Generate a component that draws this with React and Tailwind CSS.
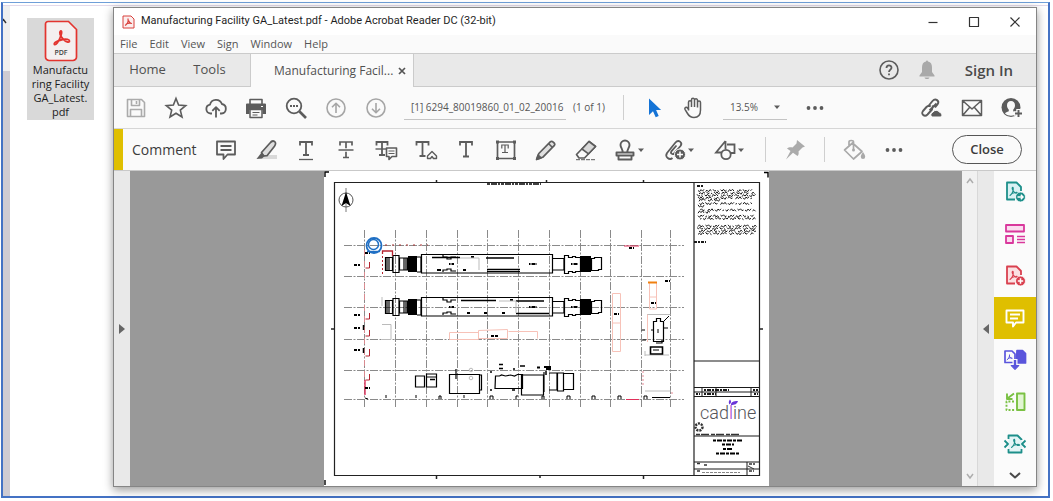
import React from "react";

function Icon({ children, color = "#5c5c5c", w = 24, sw = 1.6 }) {
  return (
    <svg
      aria-hidden="true"
      width={w}
      height="24"
      viewBox={`0 0 ${w} 24`}
      fill="none"
      stroke={color}
      strokeWidth={sw}
      strokeLinejoin="round"
      className="shrink-0"
    >
      {children}
    </svg>
  );
}

function Tool({ label, children, className = "w-10", height = "h-8" }) {
  return (
    <button type="button" aria-label={label} className={`flex shrink-0 items-center justify-center ${height} ${className}`}>
      {children}
    </button>
  );
}

const CaretIcon = () => (
  <svg aria-hidden="true" width="6" height="24" viewBox="0 0 6 24" className="shrink-0">
    <path d="M0 10.500h6l-3 3.500z" fill="#5c5c5c" />
  </svg>
);

const Dots = () => (
  <Icon>
    <g fill="#5c5c5c" stroke="none">
      <circle cx="5.500" cy="12" r="1.900" />
      <circle cx="12" cy="12" r="1.900" />
      <circle cx="18.500" cy="12" r="1.900" />
    </g>
  </Icon>
);

/* Serif capital T drawn as strokes, used by the text markup tools */
const Tee = ({ x = 12, top = 4, bottom = 17, half = 6, sw = 1.8 }) => (
  <path
    strokeWidth={sw}
    strokeLinejoin="miter"
    d={`M${x - half} ${top + 3.5}V${top}H${x + half}V${top + 3.5}M${x} ${top}V${bottom}M${x - 3} ${bottom}H${x + 3}`}
  />
);

const acro = "M8.5 15.5c2-1.500 3.500-4.500 3.200-7.500c-.5-1.500-1.500 0-.7 1.500c.8 2 2.500 4 5 4c1.500-.5 0-1.500-2-1c-2 .2-4 1-5.500 3z";

function MainToolbar() {
  return (
    <div className="flex h-[42px] items-center border-b border-[#d6d6d6] pl-[2px] pr-1">
      <Tool label="Save">
        <Icon color="#ababab">
          <path d="M3.500 3.500h14l3 3v14h-17zM7.500 3.500v6h8v-6M6.500 20.500v-7h11v7M12.500 5v3" />
        </Icon>
      </Tool>
      <Tool label="Star">
        <Icon>
          <path d="M12 2.500l2.600 6.600 7.100.5-5.400 4.500 1.700 6.900-6-3.800-6 3.800 1.700-6.900-5.400-4.500 7.100-.5z" strokeLinejoin="miter" />
        </Icon>
      </Tool>
      <Tool label="Upload to cloud">
        <Icon sw={1.8}>
          <path d="M8 17.500H6.500a4.500 4.500 0 0 1-.5-8.900a6.200 6.200 0 0 1 11.900-.6a4.800 4.800 0 0 1-.4 9.500H16M12 21.500v-10M8.300 14.800l3.700-3.700 3.700 3.700" />
        </Icon>
      </Tool>
      <Tool label="Print">
        <Icon>
          <path d="M6 8V3.500h12V8" />
          <path d="M2 8.500a1 1 0 0 1 1-1h18a1 1 0 0 1 1 1V18h-3.500v-4h-13v4H2z" fill="#5c5c5c" stroke="none" />
          <path d="M6 13.500h12v8H6z" fill="#fafafa" strokeWidth="1.500" />
          <path d="M8.500 16.500h7M8.500 19h5" strokeWidth="1.200" />
          <path d="M17 10.500h2" stroke="#fff" strokeWidth="1.200" />
        </Icon>
      </Tool>
      <Tool label="Find">
        <Icon sw={1.8}>
          <circle cx="10" cy="10" r="7.300" />
          <path d="M15.500 15.500l6.500 6.500" strokeWidth="2.600" />
          <path d="M6 10h2M9 10h2M12 10h2" strokeWidth="1.800" />
        </Icon>
      </Tool>
      <Tool label="Previous page">
        <Icon color="#a6a6a6">
          <circle cx="12" cy="12" r="9" />
          <path d="M12 17V7.500M8 11.300l4-4 4 4" />
        </Icon>
      </Tool>
      <Tool label="Next page">
        <Icon color="#a6a6a6">
          <circle cx="12" cy="12" r="9" />
          <path d="M12 7v9.500M8 12.700l4 4 4-4" />
        </Icon>
      </Tool>
      <input
        aria-label="Page number"
        defaultValue="[1] 6294_80019860_01_02_20016"
        className="ml-2 h-6 w-[162px] border-b border-[#c4c4c4] bg-transparent pl-[7px] text-[10px] text-[#555]"
      />
      <span className="ml-[7px] whitespace-nowrap text-[10px] text-[#555]">(1 of 1)</span>
      <span className="ml-[18px] h-[25px] w-px bg-[#cfcfcf]" />
      <Tool label="Select" className="ml-[10px] w-10">
        <Icon>
          <path d="M7 2.500v16.500l4-3.800 2.700 6 3-1.300-2.600-5.800h5z" fill="#1473d6" stroke="none" />
        </Icon>
      </Tool>
      <Tool label="Hand">
        <Icon sw={1.5}>
          <path d="M6.500 14.500V6.300a1.500 1.500 0 0 1 3 0V11M9.500 11V3.800a1.500 1.500 0 0 1 3 0V11M12.500 11V4.300a1.500 1.500 0 0 1 3 0V11.500M15.500 11.500V6.500a1.500 1.500 0 0 1 3 0V14c0 5-2.500 7.500-6.500 7.500-3.500 0-5-1.500-6.500-4L3 13.300c-.8-1.500 1.500-2.800 2.500-1.300l1.500 2" />
        </Icon>
      </Tool>
      <button type="button" className="ml-[9px] flex h-6 w-16 shrink-0 items-center justify-between border-b border-[#c4c4c4] pl-[7px] pr-[7px] text-[10px] text-[#555]">
        13.5%
        <CaretIcon />
      </button>
      <Tool label="More tools" className="ml-2 w-10">
        <Dots />
      </Tool>
      <div className="ml-auto flex">
        <Tool label="Share link">
          <Icon sw={1.9}>
            <path d="M9.500 14.500l7-7M8 10.500l4.500-5.500c3-3.500 7.500 0 5 3.500l-2.500 3M13 9.500l-1 4-4.500 5c-3 3-7-.5-4.500-3.500l3.500-4c1.200-1.300 3-1.500 4.200-.5" />
            <path d="M12 21a2.600 2.600 0 0 1 .8-4.700a3.800 3.800 0 0 1 6.700 0a2.700 2.700 0 0 1 1.500 4.700z" fill="#5c5c5c" stroke="#fafafa" strokeWidth="1" />
          </Icon>
        </Tool>
        <Tool label="Send by email">
          <Icon>
            <path d="M2.500 4.500h19v15h-19zM3 5l9 8 9-8M3 19l6.500-7.500M21 19l-6.500-7.500" strokeWidth="1.500" />
          </Icon>
        </Tool>
        <Tool label="Add people">
          <Icon>
            <circle cx="11" cy="11.500" r="9.500" fill="#5c5c5c" stroke="none" />
            <path d="M11 5c-2.500 0-4 1.800-4 4.300 0 2 .8 3.500 1.800 4.400v1.500c-1.800.7-3.300 1.300-3.800 2.300 3.500 3 8.500 3 12 0-.5-1-2-1.600-3.800-2.300v-1.500c1-.9 1.800-2.400 1.800-4.400 0-2.500-1.500-4.300-4-4.300z" fill="#fafafa" stroke="none" />
            <path d="M18.500 13v9M14 17.500h9" stroke="#fafafa" strokeWidth="4.500" />
            <path d="M18.500 14v7M15 17.500h7" strokeWidth="1.900" />
          </Icon>
        </Tool>
      </div>
    </div>
  );
}

function CommentBar() {
  return (
    <div className="flex h-[42px] items-center border-b border-[#c9c9c9]">
      <span className="w-[9px] self-stretch bg-[#dfbf00]" />
      <h1 className="w-[83px] shrink-0 pl-[9px] text-[14px] font-medium text-[#3c3c3c]">Comment</h1>
      <Tool label="Sticky note">
        <Icon sw={1.8}>
          <path d="M3 3.500h18v13h-7.500l-4 4.500v-4.500H3zM6.500 8h11M6.500 12h11" />
        </Icon>
      </Tool>
      <Tool label="Highlight">
        <Icon>
          <path d="M12 17h11v4H5z" fill="#d9d9d9" stroke="none" />
          <path d="M7.500 14.500l8.500-9.500c1.500-2 3-2.500 4.500-1.500s1.300 3 0 4.700l-7.500 9.500-3.500.3z" fill="#dedede" strokeWidth="1.700" />
          <path d="M7.500 14.500l3.500 3.200-3 2.800-5.500.5z" fill="#5c5c5c" stroke="none" />
        </Icon>
      </Tool>
      <Tool label="Underline text">
        <Icon>
          <Tee />
          <path d="M5 21.500h14" strokeWidth="1.300" />
        </Icon>
      </Tool>
      <Tool label="Strikethrough text">
        <Icon>
          <Tee bottom={19.5} sw={1.7} />
          <path d="M4.500 12h15" stroke="#fafafa" strokeWidth="3.500" />
          <path d="M4.500 12h15" strokeWidth="1.500" />
        </Icon>
      </Tool>
      <Tool label="Replace text">
        <Icon>
          <Tee x={8} bottom={17} half={5.5} />
          <path d="M1.500 11h11" strokeWidth="1.400" />
          <path d="M12.500 10h10v8.500H18l-3 3v-3h-2.500z" fill="#fafafa" strokeWidth="1.600" />
          <path d="M14.500 13h6M14.500 15.500h6" strokeWidth="1.200" />
        </Icon>
      </Tool>
      <Tool label="Insert text">
        <Icon>
          <Tee x={8.5} bottom={18} />
          <path d="M13.500 18l4.500-4.500 4.500 4.500v2.500h-3L18 18.500l-1.500 2h-3z" strokeWidth="1.400" />
        </Icon>
      </Tool>
      <Tool label="Add text">
        <Icon>
          <Tee bottom={18.5} />
        </Icon>
      </Tool>
      <Tool label="Text box">
        <Icon>
          <path d="M3.500 4h17v16.500h-17z" strokeLinejoin="miter" strokeWidth="1.700" />
          <Tee x={11} top={7} bottom={14.5} half={3.2} sw={1.2} />
          <path d="M2 2.500h3v3H2zM19 2.500h3v3h-3zM2 19h3v3H2zM19 19h3v3h-3z" fill="#5c5c5c" stroke="none" />
        </Icon>
      </Tool>
      <Tool label="Pencil">
        <Icon>
          <path d="M2.800 21.300l2-5.800L16.500 3.700c1.500-1.400 5.300 1.900 3.900 3.600L8.700 19.300z" fill="#e0e0e0" strokeWidth="1.700" />
          <path d="M2.500 21.500l1.600-4.500 3 2.900zM14.500 5.500l4 4" fill="#5c5c5c" />
        </Icon>
      </Tool>
      <Tool label="Eraser">
        <Icon>
          <path d="M2.500 16.500L15 3.500l6.500 5L10.500 20H5z" strokeWidth="1.700" />
          <path d="M8 11L15 3.500l6.500 5-7 7.300z" fill="#d9d9d9" strokeWidth="1.600" />
          <path d="M2 21.700h20" strokeWidth="1" strokeDasharray="4 1" />
        </Icon>
      </Tool>
      <Tool label="Stamp" className="w-[50px] gap-px pr-[6px]">
        <Icon sw={1.9}>
          <path d="M3.500 14.500h17v3h-17zM5.500 17.500v4h13v-4M9.500 14.500c.8-3-2-4.500-2-7.500a4.500 4.500 0 0 1 9 0c0 3-2.800 4.500-2 7.500" />
        </Icon>
        <CaretIcon />
      </Tool>
      <Tool label="Attach file" className="w-[50px] gap-px pr-[6px]">
        <Icon sw={1.8}>
          <path d="M9.500 20c-3 2.500-8-1-5.500-5l8.500-10.500c3-3.500 7.500 0 5 3.500l-6.500 7.500c-1.500 1.500-4-.3-2.500-2.300l5-5.700" />
          <circle cx="17" cy="16.500" r="5.500" fill="#5c5c5c" stroke="#fafafa" strokeWidth="1" />
          <path d="M17 13.500v6M14 16.500h6" stroke="#fff" strokeWidth="1.500" />
        </Icon>
        <CaretIcon />
      </Tool>
      <Tool label="Drawing tools" className="w-[50px] gap-px pr-[6px]">
        <Icon sw={1.8}>
          <path d="M12.500 3L3 14.500h6M12.500 3v8M14 6.500h7.500V15h-4" strokeLinejoin="miter" />
          <circle cx="13" cy="16.500" r="4.700" />
        </Icon>
        <CaretIcon />
      </Tool>
      <span className="ml-[9px] h-[25px] w-px bg-[#cfcfcf]" />
      <Tool label="Keep tool selected" className="mx-[9px] w-10">
        <Icon>
          <path d="M14 2l8 6.500-2.500 1-4 4c.5 2 0 3.500-1 4.500L10 14.800 3 21.500l4.500-8.500L4 10.500c1.500-1.300 3.500-1.500 5.500-1l4-4z" fill="#ababab" stroke="none" />
        </Icon>
      </Tool>
      <span className="h-[25px] w-px bg-[#cfcfcf]" />
      <Tool label="Colour" className="ml-[9px] w-10">
        <Icon color="#a9a9a9" sw={1.7}>
          <path d="M10.500 5l9.500 8.500-8.500 7.500-9-9zM11.500 11.500V4c0-2-4.500-2-4.500 0v4" />
          <circle cx="11.500" cy="12" r="1.500" fill="#a9a9a9" stroke="none" />
          <path d="M21 14c1.500 2.300 2.200 3.500 2.200 4.700a2.200 2.200 0 0 1-4.400 0c0-1.200.7-2.400 2.200-4.700z" fill="#a9a9a9" stroke="none" />
        </Icon>
      </Tool>
      <Tool label="More comment tools">
        <Dots />
      </Tool>
      <button type="button" className="ml-auto mr-[14px] h-[29px] w-[70px] shrink-0 rounded-full border border-[#555] text-[13px] font-semibold text-[#3c3c3c]">
        Close
      </button>
    </div>
  );
}

const columns = [364, 395, 426, 457, 487, 518, 549, 580, 610, 641, 670];
const rows = [245, 276, 307, 339, 370, 399];
const notes = [
  [190.5, 698, 753],
  [193, 699, 755],
  [195.5, 697, 756],
  [198, 698, 754],
  [200, 699, 722],
  [203.5, 698, 753],
  [206, 698, 706],
  [210, 700, 757],
  [212, 698, 711],
  [216, 698, 755],
  [218.5, 700, 756],
  [226, 698, 757],
  [228.5, 697, 756],
  [231, 699, 757],
  [233.5, 698, 754],
];
const jitter = [0, 2, -1.5, 1, -2, 1.5, -0.5, 2.2, -1.5, 0.5, -2, 1, 0];

/* A run of unreadably small lettering: a jagged line broken into words */
function scribble([y, x1, x2], row) {
  let d = "";
  for (let x = x1, i = row * 5; x < x2; x += 1.5, i += 1) {
    const pen = i % 5 === 0 || i % 13 === 0 || d === "" ? "M" : "L";
    d += `${pen}${x.toFixed(1)} ${(y + jitter[i % jitter.length] * 0.6).toFixed(1)}`;
  }
  return d;
}

function Machine() {
  return (
    <g stroke="#000" strokeWidth="1.200" fill="none">
      <path d="M385.500 257.500h7v13h-7zM393 255.500h6v17h-6zM399.500 258h8v12h-8zM417 257h4v15h-4M553 258.500h11v11.500h-11" />
      <path d="M421.500 254.500h131v18.500h-131zM564.500 255.500h4v2h4v-1h3v1h5v14h-5v1h-3v-1h-4v2h-4zM591.500 258.500h3v-1h7v12h-3v1h-7z" />
      <path d="M387 258v12M389 258v12M404 258v12M406 258v12" />
      <path d="M408 256h9v16h-9zM580 256h11v16h-11z" fill="#000" stroke="none" />
      <path d="M449 264h5M529 264h8M571 264h7" strokeWidth="2.200" strokeDasharray="1.500 1 4 1" />
      <path d="M443 255v2h4v2h4v-2h5M443 272v-2h4v-1h4v2h5" />
    </g>
  );
}

function Drawing() {
  return (
    <svg role="img" aria-label="Manufacturing facility general arrangement drawing" width="445" height="315" viewBox="324 171 445 315" className="shrink-0 bg-white">
      <g fill="none" stroke="#222">
        <path d="M334 182.500h425.500M759.500 182v294M334 475.500h426M334.500 182v294M694 182v294" strokeWidth="1.200" />
        <path d="M325 177v-5h4M764 172.500h4v5M325 480v5" stroke="#000" strokeWidth="1.400" />
        <path d="M436.500 180v3M546.500 180v3M643.500 180v3M436.500 475v4M540 475v3M643.500 475v4M331 329h4M759 329h4" strokeWidth="1.500" />
      </g>
      <path d="M487 184h54" stroke="#000" strokeWidth="1.500" strokeDasharray="3 1 6 1 2 1" />

      <g fill="none" stroke="#555">
        <circle cx="346" cy="200" r="7" strokeWidth="1" />
        <path d="M346 188v24" strokeWidth=".8" />
        <path d="M346 192l4.500 14-4.500-3-4.500 3z" fill="#000" stroke="none" />
      </g>

      <g stroke="#8a8a8a" strokeWidth="1" strokeDasharray="8 1.500 2 1.500">
        {columns.map((x) => (
          <path key={x} d={`M${x + 0.5} 230v177`} />
        ))}
        {rows.map((y) => (
          <path key={y} d={`M344 ${y + 0.5}h340`} />
        ))}
      </g>

      <Machine />
      <g transform="translate(0 43)">
        <Machine />
      </g>
      <g stroke="#000" fill="none">
        <path d="M432 257.500h28M486 258h28M487 269.500h33M461 300.500h35M516 301h28M516 313.500h33" strokeWidth="1.600" />
        <path d="M437 270h4M463 270h3M471 257h3M467 313h3M484 313h3M502 313h3M510 300h3" strokeWidth="2" />
        <path d="M460 258h19v12M499 301h17v12" stroke="#bbb" />
        <path d="M487 271.500h33" strokeWidth="1" />
      </g>

      <g fill="none" stroke="#b4232f" strokeWidth="1">
        <path d="M382.500 254v-3h10v5" strokeWidth="1.300" />
        <path d="M382.500 256v18" strokeDasharray="2 2" />
        <path d="M364.500 250v130" stroke="#d98a90" strokeDasharray="6 5" />
        <path d="M369.500 262v6h-4M369.500 313v6h-4M369.500 330v6h-4M369.500 349v7h-4M369.500 374v6h-4" />
        <path d="M365 380v15" stroke="#e0305a" strokeWidth="1.400" />
        <path d="M624 246h15M626 399.500h13" stroke="#e0305a" />
        <path d="M643 371v14M672 392v4" strokeDasharray="2 2" stroke="#e58a94" />
        <path d="M385 245h43" stroke="#a33" strokeDasharray="2 5" />
      </g>
      <g stroke="#000" strokeWidth="2.200" fill="none" strokeDasharray="3 1">
        <path d="M354 265h6M354 315h6M354 328h6M354 350h6M629 248h5M365 388h5M365 253h5M665 281h5M614 314h5M651 303h5M491 336h7" />
        <path d="M363.500 325v5M363.500 348v5" strokeDasharray="none" strokeWidth="1.500" />
      </g>
      <g fill="none" stroke="#f7c2b8">
        <path d="M449.500 332.500h29v7h-29zM478.500 330.500l29-1v9h-29zM508.500 331.500h29v7M612.500 293.500h8v58h-8zM612 323h8M649.500 283v26h7v-26M649 297h8M647.500 314v28" />
      </g>
      <path d="M648 282.500h9" stroke="#f08010" strokeWidth="2" />
      <path d="M647.500 314.500h23M382 324.500h9v15h-9M382 297v9M645 356v-5M645 391h26M645 355h24" stroke="#bbb" fill="none" />
      <g stroke="#aaa" fill="none" strokeWidth=".8">
        <circle cx="471" cy="370" r="1.800" />
        <circle cx="471" cy="378" r="1.800" />
      </g>
      <circle cx="374" cy="245.500" r="7.500" stroke="#1f6fc4" strokeWidth="1.800" fill="none" />
      <circle cx="373.500" cy="244.500" r="5" stroke="#1f6fc4" strokeWidth="1.500" fill="none" />
      <path d="M367 251.500h13" stroke="#1f6fc4" strokeWidth="1.400" />

      <g fill="none" stroke="#000" strokeWidth="1.200">
        <path d="M415.500 376h9v11h-9zM426.500 374h10v13h-10zM426 377h11M449.500 374.500h30v19h-30zM479 375h2.500v15h-2.500M456 369v10" />
        <path d="M495.500 376h4l2-1 4 1 5-1 4 1 3-1.500h5v14h-27.500zM521.500 375h22v20h-22zM544 372v20M549 373h8v17h-8M557.500 373h6v18h-6zM564 373.500h9.500v16h-9.500" />
        <path d="M544 367h7M546 369h5M537 367.500h3" strokeWidth="2" />
        <path d="M546 371v4" strokeWidth="1.500" />
        <path d="M499 364.500h4M499 368.500h4" strokeWidth="1.500" />
        <path d="M430 379.500h5M490 372h2M490 390h2M512 390h3M513 369h2M520 366h5" strokeWidth="1.600" />
        <path d="M386 398v-3M416 398v-3M439 399v-3h2v3M464 398v-3M490 399v-3h3v3M516 399v-3h2M542 399v-3h2v3M567 399v-3h3v3M592 399v-3h3v3M618 399v-3h3v3M644 399v-3h3v3M652 397.500h18M365 398l3 1" strokeWidth="1" />
        <path d="M653.500 321.500h3v-3h4v3h3v20h-10zM656 343h6v-3" />
        <path d="M650.500 347h12v7h-12z" strokeWidth="1.600" />
        <path d="M653 350h6M663 328h5M663 322l6-6M651 330h2M641 330h4M642 340h4M658 329v4" strokeWidth="1" />
      </g>

      <g stroke="#1a1a1a" fill="none">
        {notes.map((note, i) => (
          <path key={note[0]} d={scribble(note, i)} strokeWidth="1" />
        ))}
        <path d="M697 186h6M694 242h12" strokeWidth="2.200" strokeDasharray="3 1 2 1" />
        <path d="M694 361h65M694 387.500h65M694 392h65M694 396.500h65M694 436h65M694 462h65M694 469h65" strokeWidth="1.100" />
        <path d="M702 387v9M716 387v9M751 387v9M747 462v13" strokeWidth="1" />
        <path d="M704 390h25M704 394h12M696 394h4M753 390h5M754 394h4" strokeWidth="1.800" strokeDasharray="2 1 4 1" />
      </g>
      <g stroke="#333" fill="none">
        <circle cx="699" cy="427" r="3.500" strokeWidth="2.500" strokeDasharray="2 1" />
        <path d="M696 434.500h45" strokeWidth="1.300" strokeDasharray="4 1 8 2" />
        <path d="M713 440.500h30M722 444.500h12M723 449h10M716 453.500h23" stroke="#000" strokeWidth="2" strokeDasharray="3 1 5 1" />
        <path d="M697 463.500h3M704 465h3M697 471h4M749 464h6M749 471h5" strokeWidth="1.500" strokeDasharray="3 1" />
        <path d="M702 472.500h38" strokeWidth="1" stroke="#888" strokeDasharray="3 1" />
        <path d="M748 466l6 3" strokeWidth="1" />
      </g>
      <text x="700" y="419" fontFamily="Roboto, sans-serif" fontSize="18" fontWeight="300" fill="#55555a">
        cad<tspan fill="#a23bd0">l</tspan>ine
      </text>
      <path d="M731 405c0-3 2-4 7-4-1 3-3 4-7 4zM729.500 404.500c-1-2-1-3 .5-5 1.500 2 1.500 3-.5 5z" fill="#6a35d8" />
    </svg>
  );
}

function ToolPane() {
  return (
    <nav aria-label="Tools pane" className="flex w-[42px] shrink-0 flex-col items-stretch bg-[#fbfbfb]">
      <Tool label="Export PDF" height="h-[42px]" className="w-full">
        <Icon color="#1d8f8a" sw={1.8}>
          <path d="M18 11V7l-4.500-4.500H4v17h8" fill="#d9f1f3" />
          <path d={acro} transform="translate(-1.500 0)" strokeWidth="1.100" />
          <circle cx="17.500" cy="17" r="5" fill="#1d8f8a" stroke="#fff" strokeWidth=".8" />
          <path d="M14.500 17h5.500M17.800 14.800l2.300 2.200-2.300 2.200" stroke="#fff" strokeWidth="1.400" />
        </Icon>
      </Tool>
      <Tool label="Organize pages" height="h-[42px]" className="w-full">
        <Icon color="#d9389c" sw={1.8}>
          <path d="M3 3h18v6.500H3zM3 14h7v7H3z" fill="#fbdcef" />
          <path d="M14 14.500h8M14 17.500h8M14 20.500h8" strokeWidth="1.400" />
        </Icon>
      </Tool>
      <Tool label="Create PDF" height="h-[42px]" className="w-full">
        <Icon color="#d9404f" sw={1.8}>
          <path d="M18 11V7l-4.500-4.500H4v17h8" fill="#fbe0e2" />
          <path d={acro} transform="translate(-1.500 0)" strokeWidth="1.100" />
          <circle cx="17.500" cy="17" r="5" fill="#d9404f" stroke="#fff" strokeWidth=".8" />
          <path d="M14.800 17h5.400M17.500 14.300v5.400" stroke="#fff" strokeWidth="1.500" />
        </Icon>
      </Tool>
      <Tool label="Comment" height="h-[42px]" className="w-full bg-[#dfbf00]">
        <Icon color="#fff" sw={1.9}>
          <path d="M3.500 4.500h17v12h-7.500l-3 4v-4H3.500zM7 8.500h10M7 12.500h8" />
        </Icon>
      </Tool>
      <Tool label="Combine files" height="h-[42px]" className="w-full">
        <Icon color="#5a55dc" sw={1.7}>
          <path d="M10 14.500H2V3h7l3 3v8" />
          <path d="M3.800 12c2-1.300 3-3.500 2.700-5.500M5 10.500c1.500-.8 3.500-.8 4.500-.2M6.300 8c.5 1.300 1.500 2.300 2.500 2.500" strokeWidth="1" />
          <path d="M14 2.500h5.500l3 3v9.500h-9z" fill="#5a55dc" />
          <path d="M9.500 11h5v7h-5z" fill="#fbfbfb" stroke="none" />
          <path d="M12 12v8" strokeWidth="2.400" />
          <path d="M8 17.500h8l-4 4.200z" fill="#5a55dc" strokeWidth="1" />
        </Icon>
      </Tool>
      <Tool label="Compress" height="h-[42px]" className="w-full">
        <Icon color="#7ac143" sw={1.9}>
          <path d="M14 3.500h7.500v16.500H14z" fill="#e2f5d3" />
          <path d="M11 11.500H3.500v8.500H12" strokeDasharray="2 1.600" />
          <path d="M11 3.500L5 8M4 3.500v5.500h5.500" />
        </Icon>
      </Tool>
      <Tool label="Optimise PDF" height="h-[42px]" className="w-full">
        <Icon color="#1d8f8a" sw={1.8}>
          <path d="M5.500 3h9l4.500 4.500v13.500h-13.500z" fill="#e3f5f6" stroke="none" />
          <path d="M5.500 7V3.500h9l4 4V8M5.500 17v3.500h13V17" />
          <path d={acro} strokeWidth="1.100" />
          <path d="M1.500 8.500L5 12l-3.500 3.500M22.500 8.500L19 12l3.500 3.500" />
        </Icon>
      </Tool>
      <Tool label="Scroll tools" height="h-5" className="w-full">
        <Icon color="#4a4a4a">
          <path d="M7 10l5 4.500 5-4.500" strokeWidth="2" />
        </Icon>
      </Tool>
    </nav>
  );
}

const Chevron = ({ d }) => (
  <svg aria-hidden="true" width="14" height="14" viewBox="0 0 14 14" fill="none" stroke="#adadad" strokeWidth="1.500">
    <path d={d} />
  </svg>
);

function AcrobatWindow() {
  return (
    <main className="mb-[9px] ml-[19px] mr-[11px] mt-px flex min-w-0 flex-1 flex-col border border-[#858585] bg-[#fafafa] shadow-[0_3px_9px_rgba(0,0,0,0.4)]">
      <header className="flex h-[27px] items-center bg-white pl-2">
        <svg aria-hidden="true" width="13" height="14" viewBox="0 0 13 14" fill="none" stroke="#d8403c">
          <path d="M1 1h8l3 3v9H1z" fill="#fbeeee" />
          <path d="M3 10.500c2-1 3.500-4 3-7M4 9c2-1 4-1.200 6-.5M6.500 5.500c.5 1.500 1.500 2.500 3 3" strokeWidth="1.200" />
        </svg>
        <span className="ml-[6px] truncate font-['Roboto','Open_Sans',sans-serif] text-[11px] text-[#1f1f1f]">
          Manufacturing Facility GA_Latest.pdf - Adobe Acrobat Reader DC (32-bit)
        </span>
        <div className="ml-auto flex">
          <Tool label="Minimize" height="h-6" className="w-[41px]">
            <Icon color="#333" sw={1.2}><path d="M7.500 12.500h9" /></Icon>
          </Tool>
          <Tool label="Maximize" height="h-6" className="w-[41px]">
            <Icon color="#333" sw={1.2}><path d="M7.500 7.500h9v9h-9z" /></Icon>
          </Tool>
          <Tool label="Close window" height="h-6" className="w-[42px]">
            <Icon color="#333" sw={1.2}><path d="M7.500 7.500l9 9M16.500 7.500l-9 9" /></Icon>
          </Tool>
        </div>
      </header>
      <nav aria-label="Menu bar" className="flex h-[18px] items-center gap-3 pl-[6px] text-[11px] text-[#555]">
        <button type="button">File</button>
        <button type="button">Edit</button>
        <button type="button">View</button>
        <button type="button">Sign</button>
        <button type="button">Window</button>
        <button type="button">Help</button>
      </nav>
      <div className="flex h-[34px] items-stretch border-y border-[#cbcbcb] bg-[#e9e9e9] text-[#505050]">
        <button type="button" className="w-[67px] text-[13px]">Home</button>
        <button type="button" className="w-[70px] border-r border-[#cbcbcb] pr-3 text-[13px]">Tools</button>
        <div className="-mb-px flex w-[163px] items-center justify-between border-r border-[#cbcbcb] bg-[#fafafa] pl-[23px] pr-[7px]">
          <span className="whitespace-nowrap text-[12px]">Manufacturing Facil...</span>
          <button type="button" aria-label="Close tab">
            <svg aria-hidden="true" width="8" height="8" viewBox="0 0 8 8" stroke="#555" strokeWidth="1.700">
              <path d="M1 1l6 6M7 1L1 7" />
            </svg>
          </button>
        </div>
        <div className="ml-auto flex items-center pr-[23px]">
          <Tool label="Help" className="w-[38px]">
            <Icon>
              <circle cx="12" cy="12" r="9" />
              <path d="M9.500 10c0-3.500 5-3.300 5-.3 0 1.800-2.500 2-2.500 4.300M12 15.500v1.800" strokeWidth="1.800" />
            </Icon>
          </Tool>
          <Tool label="Notifications" className="w-[38px]">
            <Icon>
              <path d="M11 3.500a1 1 0 0 1 2 0c3 .6 4 3 4 6v4.500l2.500 3.500v1h-15v-1L7 14V9.500c0-3 1-5.400 4-6zM9.500 19.500h5c-.5 2-4.500 2-5 0z" fill="#a9a9a9" stroke="none" />
            </Icon>
          </Tool>
          <button type="button" className="ml-[19px] text-[15px] font-semibold text-[#4a4a4a]">Sign In</button>
        </div>
      </div>
      <MainToolbar />
      <CommentBar />
      <div className="flex flex-1">
        <button type="button" aria-label="Show navigation pane" className="flex w-4 shrink-0 items-center justify-center bg-[#e9e9e9]">
          <svg aria-hidden="true" width="6" height="10" viewBox="0 0 6 10"><path d="M0 0l6 5-6 5z" fill="#666" /></svg>
        </button>
        <div className="flex min-w-0 flex-1 justify-center bg-[#999]">
          <Drawing />
        </div>
        <div className="flex w-[15px] shrink-0 flex-col items-center justify-between bg-[#f1f1f1] py-[3px]">
          <Chevron d="M4 9l3-4 3 4" />
          <Chevron d="M4 5l3 4 3-4" />
        </div>
        <button type="button" aria-label="Hide tools pane" className="flex w-[17px] shrink-0 items-center justify-center border-l border-[#d8d8d8] bg-[#e9e9e9]">
          <svg aria-hidden="true" width="6" height="10" viewBox="0 0 6 10"><path d="M6 0L0 5l6 5z" fill="#666" /></svg>
        </button>
        <ToolPane />
      </div>
    </main>
  );
}

export default function App() {
  return (
    <div className="min-h-screen bg-white pb-[3px] pl-px pr-[3px] pt-[2px] font-['Open_Sans','Noto_Sans',sans-serif]">
      <div className="border-2 border-t border-[#4472c4] border-t-[#6f9fd8] pt-[2px]">
        <div className="flex border-t border-[#e3d9ea]">
          <div className="flex w-[7px] shrink-0 flex-col bg-[#cfcbd2]">
            <div className="flex h-[65px] items-start bg-[#efefef] pt-3">
              <svg aria-hidden="true" width="4" height="6" viewBox="0 0 4 6" fill="none" stroke="#333" strokeWidth="1.400"><path d="M0 1l3 4" /></svg>
            </div>
          </div>
          <div className="pl-[17px] pt-3">
            <figure className="flex w-[67px] flex-col items-center bg-[#d9d9d9] px-1 pb-px pt-[2px]">
              <svg aria-label="PDF file" width="34" height="42" viewBox="0 0 34 42" fill="none" stroke="#e3342f" strokeWidth="1.700">
                <path d="M4 1.500h20.500l8 8V37a3.500 3.500 0 0 1-3.500 3.500H5A3.500 3.500 0 0 1 1.500 37V4A2.500 2.500 0 0 1 4 1.500z" fill="#f4efef" />
                <path d="M10.500 24.500c-1.500-1.500 3.500-4 8-5 4-.7 7 0 7 1.500 0 2-4 1-6.500-2-3-3-4-7-2.500-8 2-.5 1 4-.5 7-1.500 3.500-4 7.500-5.500 6.500z" strokeWidth="1.800" />
                <text x="17" y="35" textAnchor="middle" fontFamily="'Open Sans', sans-serif" fontSize="7" fontWeight="600" fill="#444" stroke="none">PDF</text>
              </svg>
              <figcaption className="pt-px text-center text-[11px] leading-[14px] text-[#1c1c1c]">
                Manufactu<br />ring Facility<br />GA_Latest.<br />pdf
              </figcaption>
            </figure>
          </div>
          <AcrobatWindow />
        </div>
      </div>
    </div>
  );
}
